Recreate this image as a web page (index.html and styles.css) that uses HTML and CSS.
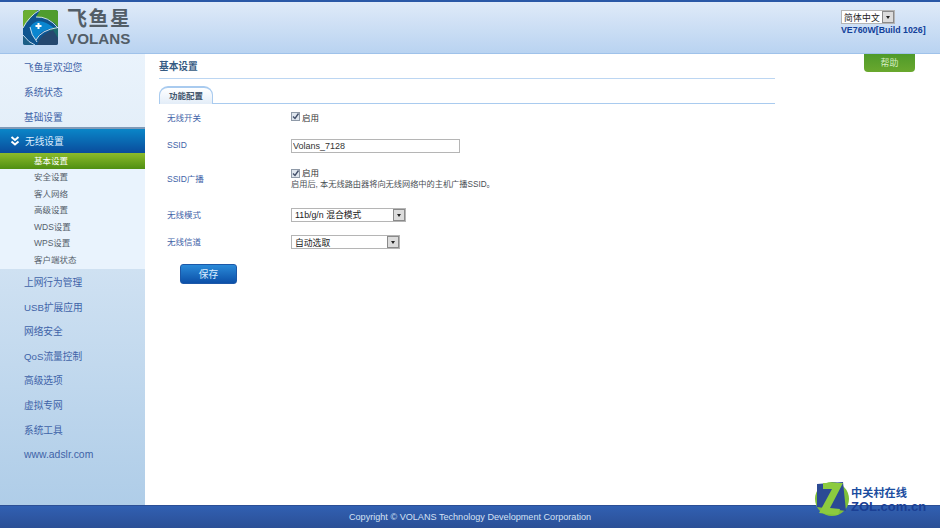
FILE: index.html
```html
<!DOCTYPE html>
<html lang="zh-CN">
<head>
    <meta charset="UTF-8">
    <title>飞鱼星 VOLANS</title>
    <link rel="stylesheet" href="styles.css">
</head>
<body>
    <div class="header">
        <div class="logo">
            <svg class="logo-mark" width="35" height="35" viewBox="0 0 35 35">
                <defs>
                    <clipPath id="logoClip"><rect width="35" height="35" rx="2.500"/></clipPath>
                </defs>
                <g clip-path="url(#logoClip)">
                    <rect width="35" height="35" fill="#0e548f"/>
                    <path d="M0 0H15L3 13L0 18Z" fill="#6aae30"/>
                    <path d="M17 0H35V17Q27 7 13 7Z" fill="#4f9c2e"/>
                    <path d="M30 17L35 17V28L26 20Z" fill="#1b6a6e"/>
                    <path d="M14 35Q18 24 30 20L35 28V35Z" fill="#25486f"/>
                    <path d="M0 25Q4 31 10 35H0Z" fill="#1d5f86"/>
                    <path d="M7 17Q15 5 31 18Q18 19 13 30Q8 25 7 17Z" fill="#0a86d0"/>
                    <path d="M0 18Q6 6 17 0M13 7Q25 6 35 18M7 17Q8 25 14 32M0 25Q6 33 12 35M13 30Q18 20 35 17.500" fill="none" stroke="#dcebf5" stroke-width="0.900"/>
                    <path d="M14.500 13h2v2h2v2h-2v2h-2v-2h-2v-2h2z" fill="#ffffff"/>
                </g>
            </svg>
            <div class="logo-text">
                <div class="logo-cn">飞鱼星</div>
                <div class="logo-en">VOLANS</div>
            </div>
        </div>
        <div class="header-right">
            <div class="select lang">
                <span class="select-text">简体中文</span>
                <span class="select-arrow"></span>
            </div>
            <div class="version">VE760W[Build 1026]</div>
        </div>
    </div>

    <div class="main">
        <div class="sidebar">
            <div class="nav-upper">
                <div class="nav-item">飞鱼星欢迎您</div>
                <div class="nav-item">系统状态</div>
                <div class="nav-item nav-last">基础设置</div>
            </div>
            <div class="nav-open">
                <svg width="10" height="10" viewBox="0 0 10 10">
                    <path d="M1.500 1L5 4L8.500 1M1.500 5.500L5 8.500L8.500 5.500" fill="none" stroke="#ffffff" stroke-width="2"/>
                </svg>
                无线设置
            </div>
            <div class="submenu">
                <div class="sub-item sub-active">基本设置</div>
                <div class="sub-item">安全设置</div>
                <div class="sub-item">客人网络</div>
                <div class="sub-item">高级设置</div>
                <div class="sub-item">WDS设置</div>
                <div class="sub-item">WPS设置</div>
                <div class="sub-item">客户端状态</div>
            </div>
            <div class="nav-lower">
                <div class="nav-item">上网行为管理</div>
                <div class="nav-item">USB扩展应用</div>
                <div class="nav-item">网络安全</div>
                <div class="nav-item">QoS流量控制</div>
                <div class="nav-item">高级选项</div>
                <div class="nav-item">虚拟专网</div>
                <div class="nav-item">系统工具</div>
                <div class="nav-item nav-link">www.adslr.com</div>
            </div>
        </div>

        <div class="content">
            <div class="page-title">基本设置</div>
            <div class="tabs">
                <div class="tab">功能配置</div>
            </div>
            <div class="form">
                <div class="row row-switch">
                    <div class="label">无线开关</div>
                    <div class="field">
                        <span class="check"><svg width="9" height="9" viewBox="0 0 9 9"><path d="M2 4.500L4 6.500L7.500 1.500" fill="none" stroke="#44506a" stroke-width="1.400"/></svg></span>
                        启用
                    </div>
                </div>
                <div class="row row-ssid">
                    <div class="label">SSID</div>
                    <div class="field">
                        <input class="text-input" type="text" value="Volans_7128">
                    </div>
                </div>
                <div class="row row-broadcast">
                    <div class="label">SSID广播</div>
                    <div class="field">
                        <div class="check-line">
                            <span class="check"><svg width="9" height="9" viewBox="0 0 9 9"><path d="M2 4.500L4 6.500L7.500 1.500" fill="none" stroke="#44506a" stroke-width="1.400"/></svg></span>
                            启用
                        </div>
                        <div class="hint">启用后, 本无线路由器将向无线网络中的主机广播SSID。</div>
                    </div>
                </div>
                <div class="row row-mode">
                    <div class="label">无线模式</div>
                    <div class="field">
                        <div class="select select-mode">
                            <span class="select-text">11b/g/n 混合模式</span>
                            <span class="select-arrow"></span>
                        </div>
                    </div>
                </div>
                <div class="row row-channel">
                    <div class="label">无线信道</div>
                    <div class="field">
                        <div class="select select-channel">
                            <span class="select-text">自动选取</span>
                            <span class="select-arrow"></span>
                        </div>
                    </div>
                </div>
            </div>
            <button class="save">保存</button>
        </div>
    </div>

    <div class="footer">Copyright © VOLANS Technology Development Corporation</div>

    <div class="help">帮助</div>

    <div class="watermark">
        <svg width="34" height="34" viewBox="0 0 34 34">
            <circle cx="17" cy="17" r="17" fill="#7fc03a"/>
            <path d="M2 2L28 0L31 29L2 25Z" fill="#2b4a94"/>
            <path d="M8 1H28L15 26L25 27L23 33L4 31L17 7L8 7Z" fill="#8ccb3f"/>
        </svg>
        <div class="watermark-text">
            <div class="wm-cn">中关村在线</div>
            <div class="wm-en">ZOL.com.cn</div>
        </div>
    </div>
</body>
</html>
```

FILE: styles.css
```css
* {
    box-sizing: border-box;
}
body {
    margin: 0;
    width: 940px;
    height: 528px;
    overflow: hidden;
    display: flex;
    flex-direction: column;
    position: relative;
    font-family: "Liberation Sans", "Noto Sans CJK SC", sans-serif;
    font-size: 8.500px;
    color: #3a3f48;
    background: #ffffff;
}
.header {
    height: 54px;
    flex: none;
    display: flex;
    justify-content: space-between;
    border-top: 2px solid #2a58a6;
    border-bottom: 1px solid #9fc2ea;
    background: linear-gradient(#dfeaf8, #b9d3f1);
}
.logo {
    display: flex;
    align-items: flex-start;
    gap: 9px;
    padding: 8px 0 0 23px;
}
.logo-text {
    margin-top: -1px;
    color: #535e68;
}
.logo-cn {
    font-size: 20px;
    font-weight: 700;
    line-height: 20px;
    letter-spacing: 1.500px;
}
.logo-en {
    font-size: 15.200px;
    font-weight: 700;
    line-height: 14px;
    margin-top: 3px;
}
.header-right {
    width: 99px;
    padding-top: 8px;
}
.select {
    display: flex;
    align-items: center;
    justify-content: space-between;
    height: 14px;
    padding: 0 0 0 3px;
    border: 1px solid #b5b5b5;
    background: #ffffff;
    font-size: 8.800px;
    color: #222222;
}
.select-arrow {
    width: 12px;
    height: 12px;
    border: 1px solid #8a8a8a;
    background: #dcdcdc;
    position: relative;
}
.select-arrow::after {
    content: "";
    position: absolute;
    left: 3px;
    top: 4px;
    border: 2px solid transparent;
    border-top: 3px solid #222222;
    border-bottom: 0;
}
.lang {
    width: 54px;
    padding-left: 2px;
    letter-spacing: 0.200px;
}
.version {
    margin-top: 1px;
    font-size: 8.800px;
    font-weight: 700;
    line-height: 11px;
    white-space: nowrap;
    color: #12409a;
}
.main {
    flex: 1;
    display: flex;
    min-height: 0;
}
.sidebar {
    width: 145px;
    flex: none;
    display: flex;
    flex-direction: column;
}
.nav-upper {
    padding-top: 1px;
    background: linear-gradient(#eaf3fc, #e4eff9);
}
.nav-item {
    height: 25px;
    line-height: 25px;
    padding-left: 24px;
    font-size: 9.700px;
    color: #3f63a8;
}
.nav-last {
    height: 22px;
}
.nav-open {
    height: 26px;
    display: flex;
    align-items: center;
    gap: 5px;
    padding-left: 10px;
    border-top: 2px solid #7f9ab8;
    background: linear-gradient(#0a86c8, #0a4c9c);
    font-size: 9.700px;
    color: #dfeeff;
}
.submenu {
    height: 116px;
    background: #e9f3fd;
}
.sub-item {
    height: 16.500px;
    line-height: 16.500px;
    padding-left: 34px;
    color: #555f6b;
}
.sub-active {
    height: 16px;
    line-height: 16px;
    background: linear-gradient(#8cbb2c, #4f8f12);
    color: #ffffff;
}
.nav-lower {
    flex: 1;
    padding-top: 2px;
    background: linear-gradient(#cfe1f2, #afcde8);
}
.nav-lower .nav-item {
    height: 24.600px;
    line-height: 24.600px;
}
.nav-lower .nav-link {
    font-size: 10.400px;
}
.content {
    flex: 1;
    padding: 0 0 0 14px;
}
.page-title {
    width: 616px;
    height: 25px;
    line-height: 26px;
    border-bottom: 1px solid #bcd6f2;
    font-size: 9.700px;
    font-weight: 700;
    color: #355a82;
}
.tabs {
    width: 616px;
    height: 18px;
    margin-top: 7px;
    border-bottom: 1px solid #a9cbef;
}
.tab {
    width: 54px;
    height: 18px;
    line-height: 16px;
    text-align: center;
    border: 1px solid #a9cbef;
    border-top: 2px solid #a9cbef;
    border-bottom: 0;
    border-radius: 9px 9px 0 0;
    background: linear-gradient(#ffffff, #e3edf8);
    font-weight: 700;
    color: #44576e;
}
.form {
    padding-left: 8px;
}
.row {
    display: flex;
    align-items: center;
}
.row-switch {
    height: 25px;
}
.row-ssid {
    height: 31px;
}
.row-broadcast {
    height: 38px;
}
.row-broadcast .label {
    margin-top: -2px;
}
.row-mode {
    height: 33px;
}
.row-mode .label {
    margin-top: -2px;
}
.row-channel {
    height: 22px;
}
.row-channel .label {
    margin-top: -2px;
}
.label {
    width: 124px;
    color: #3f63a8;
}
.field {
    color: #333333;
}
.check-line {
    line-height: 12px;
    display: flex;
    align-items: center;
    gap: 2px;
}
.row-switch .field {
    display: flex;
    align-items: center;
    gap: 2px;
}
.check {
    width: 9px;
    height: 9px;
    display: block;
    border: 1px solid #8f9aa8;
    background: #dfe6ee;
}
.check svg {
    display: block;
    margin: -1px;
}
.hint {
    font-size: 8.200px;
    line-height: 12px;
    white-space: nowrap;
    color: #4a4f55;
}
.text-input {
    display: block;
    width: 169px;
    height: 14px;
    margin-top: 2px;
    padding: 0 1px;
    border: 1px solid #b5b5b5;
    font-family: "Liberation Sans", sans-serif;
    font-size: 9px;
    color: #333333;
}
.select-mode {
    width: 115px;
}
.select-channel {
    width: 109px;
}
.save {
    display: block;
    width: 57px;
    height: 20px;
    margin: 11px 0 0 21px;
    padding: 0;
    border: 1px solid #1c58a8;
    border-radius: 3px;
    background: linear-gradient(#2a8ad8, #0c50a8);
    font-family: inherit;
    font-size: 9.700px;
    color: #d8ecff;
}
.footer {
    height: 23px;
    flex: none;
    line-height: 23px;
    text-align: center;
    border-top: 1px solid #2c4f95;
    background: linear-gradient(#3160b2, #2b4f96);
    font-size: 9.100px;
    color: #d5e2f5;
}
.help {
    position: absolute;
    left: 864px;
    top: 54px;
    width: 51px;
    height: 18px;
    line-height: 19px;
    text-align: center;
    border-radius: 0 0 4px 4px;
    background: linear-gradient(#4f9a2a, #6aa82e);
    font-size: 9px;
    color: #d6eec2;
}
.watermark {
    position: absolute;
    left: 815px;
    top: 482px;
    display: flex;
    gap: 2px;
}
.watermark-text {
    padding-top: 5px;
}
.wm-cn {
    font-size: 11.200px;
    font-weight: 700;
    line-height: 13px;
    color: #1a4da0;
}
.wm-en {
    font-size: 13px;
    font-weight: 700;
    line-height: 13px;
    color: #1a3f94;
}
```
